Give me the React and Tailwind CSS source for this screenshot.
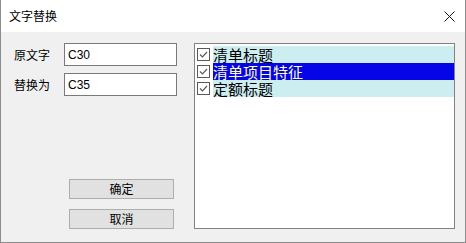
import React from 'react'

const items = [
    { label: '清单标题', selected: false },
    { label: '清单项目特征', selected: true },
    { label: '定额标题', selected: false },
]

const cjk = { fontFamily: '"Noto Sans CJK SC", "Microsoft YaHei", sans-serif' }

function CheckBox() {
    return (
        <div className="w-[13px] h-[13px] border border-[#5a5a5a] bg-white flex items-center justify-center shrink-0">
            <svg width="11" height="11" viewBox="0 0 11 11">
                <polyline points="2,5.5 4.5,8 9,3" fill="none" stroke="#5a5a5a" strokeWidth="1.2" />
            </svg>
        </div>
    )
}

function App() {
    return (
        <div className="w-[466px] h-[243px] flex flex-col border-x border-b border-[#8c8c8c] bg-[#f0f0f0] text-black" style={cjk}>
            <div className="h-[32px] bg-white flex items-center justify-between pl-[8px] pr-[10px] shrink-0">
                <span className="text-[12px]">文字替换</span>
                <svg width="11" height="11" viewBox="0 0 11 11">
                    <path d="M0.5 0.5 L10.5 10.5 M10.5 0.5 L0.5 10.5" stroke="#111" strokeWidth="1" />
                </svg>
            </div>
            <div className="flex pl-[13px] pt-[11px]">
                <div className="w-[163px] h-[186px] flex flex-col">
                    <div className="flex items-center h-[23px]">
                        <span className="w-[50px] text-[12px]">原文字</span>
                        <div className="w-[113px] h-[23px] border border-[#7a7a7a] bg-white flex items-center pl-[3px] text-[12px]" style={{ fontFamily: '"Liberation Sans", Arial, sans-serif' }}>C30</div>
                    </div>
                    <div className="flex items-center h-[23px] mt-[7px]">
                        <span className="w-[50px] text-[12px]">替换为</span>
                        <div className="w-[113px] h-[23px] border border-[#7a7a7a] bg-white flex items-center pl-[3px] text-[12px]" style={{ fontFamily: '"Liberation Sans", Arial, sans-serif' }}>C35</div>
                    </div>
                    <div className="mt-auto ml-[55px] flex flex-col gap-[10px]">
                        <button className="w-[105px] h-[20px] bg-[#e1e1e1] border border-[#adadad] text-[12px] flex items-center justify-center">确定</button>
                        <button className="w-[105px] h-[20px] bg-[#e1e1e1] border border-[#adadad] text-[12px] flex items-center justify-center">取消</button>
                    </div>
                </div>
                <div className="ml-[17px] w-[261px] h-[186px] border border-[#828282] bg-white pt-[2px] pl-[2px]">
                    {items.map(item => (
                        <div key={item.label} className="flex items-center h-[17px]">
                            <CheckBox />
                            <div className={`ml-[3px] flex-1 h-[17px] text-[15px] leading-[17px] ${item.selected ? 'bg-[#0505e8] text-[#ffffb4]' : 'bg-[#cdeef1] text-black'}`}>
                                {item.label}
                            </div>
                        </div>
                    ))}
                </div>
            </div>
        </div>
    )
}

export default App
